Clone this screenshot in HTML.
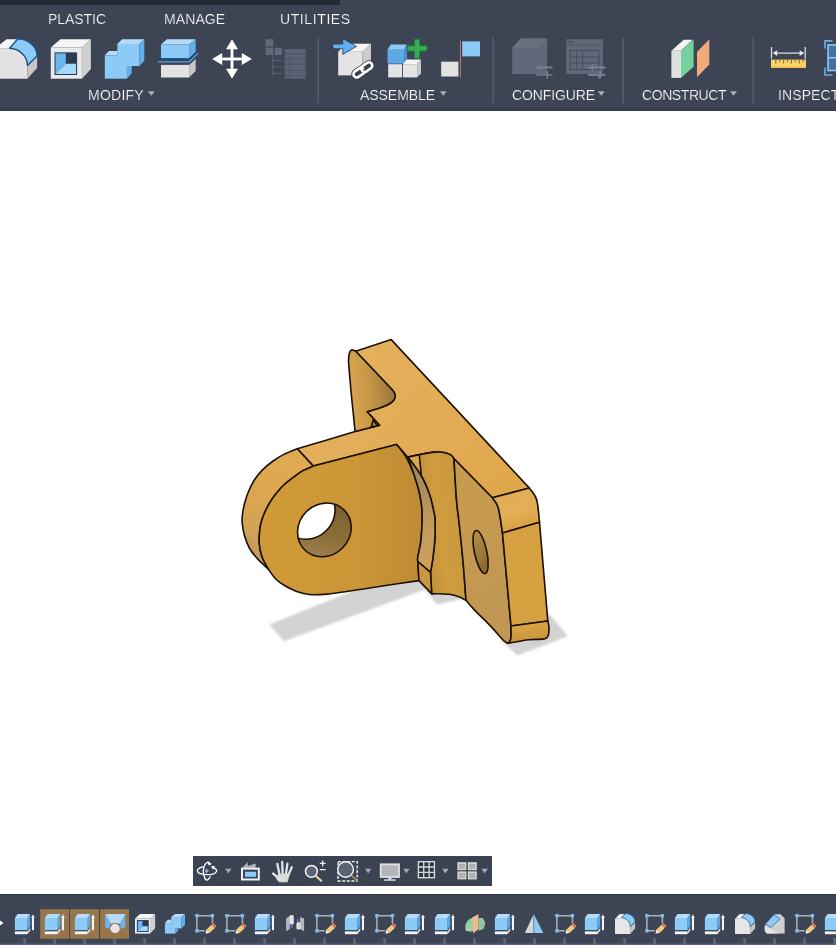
<!DOCTYPE html><html><head><meta charset="utf-8"><title>Fusion</title><style>
html,body{margin:0;padding:0}
body{width:836px;height:945px;overflow:hidden;background:#fff;position:relative;font-family:"Liberation Sans",sans-serif}
#top{position:absolute;left:0;top:0;width:836px;height:111px;background:#3d4555;overflow:hidden}
#top .dk{position:absolute;left:0;top:0;width:340px;height:5px;background:#232a36}
#top .bt{position:absolute;left:0;top:107px;width:836px;height:4px;background:linear-gradient(#3a4251,#353c49)}
.lb{position:absolute;will-change:transform;color:#ffffff;-webkit-text-stroke:0.22px #3d4555;font-size:14px;line-height:14px;white-space:nowrap;font-weight:400}
#nav{position:absolute;left:193px;top:856px;width:299px;height:30px;background:#3b4353}
#tl{position:absolute;left:0;top:894px;width:836px;height:51px;background:#3d4555;overflow:hidden;border-top:1px solid #2f3644;box-sizing:border-box}
#tl .bl{position:absolute;left:0;top:48px;width:836px;height:2px;background:linear-gradient(#48515f 50%,#586376 50%)}
svg{overflow:visible}
</style></head><body>
<svg id="model" width="836" height="945" viewBox="0 0 836 945" style="position:absolute;left:0;top:0">
<defs>
<filter id="bl" x="-5%" y="-10%" width="110%" height="120%"><feGaussianBlur stdDeviation="0.9"/></filter>
<linearGradient id="gPF" gradientUnits="userSpaceOnUse" x1="349" y1="400" x2="394" y2="396"><stop offset="0" stop-color="#dba650"/><stop offset="0.45" stop-color="#c89848"/><stop offset="1" stop-color="#9c763a"/></linearGradient>
<linearGradient id="gBand" gradientUnits="userSpaceOnUse" x1="290" y1="455" x2="250" y2="560"><stop offset="0" stop-color="#e0aa52"/><stop offset="0.5" stop-color="#dba650"/><stop offset="0.8" stop-color="#cfa05a"/><stop offset="1" stop-color="#c0955a"/></linearGradient>
<linearGradient id="gLug" gradientUnits="userSpaceOnUse" x1="260" y1="520" x2="422" y2="520"><stop offset="0" stop-color="#d09a38"/><stop offset="0.6" stop-color="#cb9637"/><stop offset="1" stop-color="#bd8b35"/></linearGradient>
<linearGradient id="gSl" gradientUnits="userSpaceOnUse" x1="410" y1="460" x2="430" y2="570"><stop offset="0" stop-color="#9a8464"/><stop offset="0.3" stop-color="#b08e5c"/><stop offset="0.6" stop-color="#c29a5c"/><stop offset="1" stop-color="#cfa25a"/></linearGradient>
<linearGradient id="gTop" gradientUnits="userSpaceOnUse" x1="360" y1="350" x2="520" y2="500"><stop offset="0" stop-color="#e4b05c"/><stop offset="0.5" stop-color="#e2ac56"/><stop offset="1" stop-color="#dfa74b"/></linearGradient>
<linearGradient id="gGus" gradientUnits="userSpaceOnUse" x1="425" y1="520" x2="462" y2="516"><stop offset="0" stop-color="#c49238"/><stop offset="0.4" stop-color="#d09c40"/><stop offset="1" stop-color="#c8973e"/></linearGradient>
<linearGradient id="gPlate" gradientUnits="userSpaceOnUse" x1="455" y1="520" x2="510" y2="600"><stop offset="0" stop-color="#c69a4f"/><stop offset="1" stop-color="#c09753"/></linearGradient>
<linearGradient id="gR1" gradientUnits="userSpaceOnUse" x1="510" y1="490" x2="520" y2="530"><stop offset="0" stop-color="#e2ad58"/><stop offset="0.55" stop-color="#e4ae55"/><stop offset="1" stop-color="#d8a040"/></linearGradient>
<linearGradient id="gR3" gradientUnits="userSpaceOnUse" x1="528" y1="622" x2="530" y2="641"><stop offset="0" stop-color="#dca548"/><stop offset="1" stop-color="#c8943a"/></linearGradient>
<linearGradient id="gHole" gradientUnits="userSpaceOnUse" x1="300" y1="545" x2="350" y2="515"><stop offset="0" stop-color="#a08050"/><stop offset="0.35" stop-color="#8e7038"/><stop offset="1" stop-color="#7a6030"/></linearGradient>
<linearGradient id="gHole2" gradientUnits="userSpaceOnUse" x1="474" y1="540" x2="488" y2="565"><stop offset="0" stop-color="#b08a40"/><stop offset="1" stop-color="#8a6a30"/></linearGradient>
<clipPath id="cHole"><ellipse cx="324.4" cy="529.9" rx="28" ry="25.6" transform="rotate(-45 324.4 529.9)"/></clipPath>
</defs>
<g fill="#d3d3d3" filter="url(#bl)">
<path d="M269.3,624.6 L283.9,641.3 L425,589.6 L437,604.7 L462,599 L460,560 L355,590Z"/>
<path d="M500,640 L517.6,655.6 L567.7,636.2 L551.5,616.5 L530,600Z"/>
</g>
<path d="M355.7,351.2L391.2,339.6L529.4,488.1L492.3,497.7L454.0,458.7C453.5,458.1 452.5,456.1 451.0,455.1C449.5,454.1 447.6,453.2 445.0,452.7C442.4,452.2 439.7,451.8 435.5,452.1C431.3,452.4 424.5,453.6 419.9,454.5C415.3,455.4 409.9,456.8 407.9,457.2L396.5,444.4L313.3,466.1L297.3,448.7C306.9,445.9 341.4,435.5 355.1,431.6C368.8,427.7 375.5,426.4 379.6,425.3L367.1,411.7C369.3,411.1 376.0,409.4 380.2,407.8C384.4,406.2 389.7,403.9 392.2,401.8C394.7,399.7 395.2,397.2 395.2,395.2C395.2,393.2 392.7,390.7 392.2,389.8L355.7,351.2Z" fill="url(#gTop)" stroke="#1c1000" stroke-width="1.6" stroke-linejoin="round" stroke-linecap="round"/>
<path d="M348.5,361.1C348.6,359.8 348.8,355.4 349.3,353.5C349.8,351.6 350.4,350.3 351.5,349.9C352.6,349.5 355.0,351.0 355.7,351.2L392.2,389.8C392.7,390.7 395.2,393.2 395.2,395.2C395.2,397.2 394.7,399.7 392.2,401.8C389.7,403.9 384.4,406.2 380.2,407.8C376.0,409.4 369.3,411.1 367.1,411.7L379.6,425.3L355.1,431.6C354.9,429.6 354.6,426.6 353.9,419.7C353.2,412.8 351.8,399.8 350.9,390.0C350.0,380.2 348.9,365.9 348.5,361.1Z" fill="url(#gPF)" stroke="#1c1000" stroke-width="1.6" stroke-linejoin="round" stroke-linecap="round"/>
<path d="M371.3,426.8 L373.1,419.9 L377.4,425.6Z" fill="#b08840" stroke="#1c1000" stroke-width="1.6" stroke-linejoin="round" stroke-linecap="round"/>
<path d="M313.3,466.1L297.3,448.7C295.1,449.6 288.0,452.3 283.8,454.4C279.6,456.5 276.1,458.8 272.4,461.5C268.7,464.2 264.8,467.5 261.8,470.6C258.8,473.7 256.4,476.7 254.2,480.2C252.0,483.7 250.0,487.9 248.4,491.7C246.8,495.5 245.6,499.3 244.6,503.2C243.6,507.1 242.8,511.7 242.4,515.0C242.0,518.3 241.9,519.7 242.2,523.0C242.5,526.3 243.1,530.8 244.3,535.0C245.5,539.2 247.5,544.6 249.6,548.5C251.7,552.4 254.7,555.5 257.0,558.2C259.3,560.9 261.6,562.8 263.5,564.7C265.4,566.6 267.8,568.6 268.6,569.4C267.5,567.2 263.4,560.5 261.9,556.2C260.3,551.9 259.7,547.5 259.3,543.5C258.9,539.5 259.3,535.4 259.6,532.0C259.9,528.6 260.2,526.2 261.0,523.0C261.8,519.8 263.0,516.5 264.5,513.0C266.0,509.5 268.2,505.2 270.2,502.0C272.1,498.8 273.9,496.4 276.2,493.6C278.5,490.8 280.9,487.7 283.8,485.0C286.7,482.3 290.2,479.7 293.4,477.3C296.6,474.9 299.7,472.5 303.0,470.6C306.3,468.7 311.6,466.9 313.3,466.1Z" fill="url(#gBand)" stroke="#1c1000" stroke-width="1.6" stroke-linejoin="round" stroke-linecap="round"/>
<path d="M313.3,466.1C311.6,466.9 306.3,468.7 303.0,470.6C299.7,472.5 296.6,474.9 293.4,477.3C290.2,479.7 286.7,482.3 283.8,485.0C280.9,487.7 278.5,490.8 276.2,493.6C273.9,496.4 272.1,498.8 270.2,502.0C268.2,505.2 266.0,509.5 264.5,513.0C263.0,516.5 261.8,519.8 261.0,523.0C260.2,526.2 259.9,528.6 259.6,532.0C259.3,535.4 258.9,539.5 259.3,543.5C259.7,547.5 260.3,551.9 261.9,556.2C263.4,560.5 266.2,565.5 268.6,569.4C271.0,573.3 273.5,576.8 276.2,579.5C278.9,582.2 281.3,583.7 285.0,585.8C288.7,587.9 293.8,590.6 298.2,592.1C302.6,593.6 306.5,594.4 311.3,594.7C316.1,595.0 321.5,594.6 327.1,594.1C332.7,593.6 335.5,593.2 345.0,591.8C354.5,590.4 371.7,587.7 384.0,585.8C396.3,583.9 413.2,581.5 419.0,580.6L417.8,561.5C417.8,560.8 417.3,560.6 417.8,557.1C418.3,553.6 420.2,547.0 420.9,540.6C421.6,534.2 422.1,524.7 422.2,519.0C422.3,513.3 422.2,511.1 421.7,506.6C421.2,502.1 420.6,497.6 419.3,492.2C418.0,486.8 416.2,480.3 413.9,474.3C411.6,468.3 408.5,461.3 405.6,456.3C402.7,451.3 398.0,446.4 396.5,444.4L313.3,466.1Z" fill="url(#gLug)" stroke="#1c1000" stroke-width="1.6" stroke-linejoin="round" stroke-linecap="round"/>
<ellipse cx="324.4" cy="529.9" rx="28" ry="25.6" transform="rotate(-45 324.4 529.9)" fill="url(#gHole)"/>
<g clip-path="url(#cHole)"><ellipse cx="308.3" cy="512.4" rx="28" ry="25.6" transform="rotate(-45 308.3 512.4)" fill="#fff" stroke="#1c1000" stroke-width="1.6" stroke-linejoin="round" stroke-linecap="round"/></g>
<ellipse cx="324.4" cy="529.9" rx="28" ry="25.6" transform="rotate(-45 324.4 529.9)" fill="none" stroke="#1c1000" stroke-width="1.6" stroke-linejoin="round" stroke-linecap="round"/>
<path d="M454.0,458.7C453.5,458.1 452.5,456.1 451.0,455.1C449.5,454.1 447.6,453.2 445.0,452.7C442.4,452.2 439.7,451.8 435.5,452.1C431.3,452.4 424.5,453.6 419.9,454.5C415.3,455.4 409.9,456.8 407.9,457.2C410.1,460.2 417.5,469.3 421.1,475.5C424.7,481.7 427.4,488.6 429.5,494.6C431.6,500.6 432.8,507.2 433.7,511.3C434.6,515.4 434.7,514.5 434.9,519.0C435.1,523.5 435.2,531.8 434.9,538.1C434.6,544.5 433.7,551.4 433.0,557.1C432.3,562.8 430.9,569.8 430.5,572.3L431.7,593.9C432.8,593.9 434.9,593.6 438.1,593.7C441.3,593.8 447.2,593.9 450.8,594.5C454.4,595.1 457.1,596.1 459.6,597.1C462.1,598.1 464.9,599.8 466.0,600.3C465.5,593.6 464.1,573.4 462.9,560.0C461.7,546.6 459.9,530.0 458.8,520.0C457.7,510.0 457.3,510.2 456.5,500.0C455.7,489.8 454.4,465.6 454.0,458.7Z" fill="url(#gGus)" stroke="#1c1000" stroke-width="1.6" stroke-linejoin="round" stroke-linecap="round"/>
<path d="M407.9,457.2 C408.9,458.6 411.8,462.4 414.0,465.5C416.2,468.6 420.1,474.2 421.3,476.0 L419.3,454.6Z" fill="#dba650" stroke="#1c1000" stroke-width="1.6" stroke-linejoin="round" stroke-linecap="round"/>
<path d="M407.9,457.2C408.9,460.1 412.0,468.5 413.9,474.3C415.8,480.1 418.0,486.8 419.3,492.2C420.6,497.6 421.2,502.1 421.7,506.6C422.2,511.1 422.3,513.3 422.2,519.0C422.1,524.7 421.6,534.2 420.9,540.6C420.2,547.0 418.3,553.6 417.8,557.1C417.3,560.6 417.8,560.8 417.8,561.5L430.5,572.3C430.9,569.8 432.3,562.8 433.0,557.1C433.7,551.4 434.6,544.5 434.9,538.1C435.2,531.8 435.1,523.5 434.9,519.0C434.7,514.5 434.6,515.4 433.7,511.3C432.8,507.2 431.6,500.6 429.5,494.6C427.4,488.6 424.7,481.7 421.1,475.5C417.5,469.3 410.1,460.2 407.9,457.2Z" fill="url(#gSl)" stroke="#1c1000" stroke-width="1.6" stroke-linejoin="round" stroke-linecap="round"/>
<path d="M417.8,561.5 L430.5,572.3 L431.7,593.9 L419.0,580.6Z" fill="#c9983f" stroke="#1c1000" stroke-width="1.6" stroke-linejoin="round" stroke-linecap="round"/>
<path d="M454.0,458.7L492.3,497.7C493.3,499.4 496.6,501.9 498.3,507.8C500.0,513.7 501.8,528.8 502.5,533.0L511.0,626.0C511.0,627.9 511.2,634.8 511.0,637.5C510.8,640.2 510.1,641.0 509.5,642.0C508.9,643.0 507.9,643.0 507.6,643.2C506.9,642.7 506.2,643.2 503.3,640.3C500.4,637.4 495.2,630.9 490.4,625.9C485.6,620.9 478.7,614.4 474.6,610.1C470.5,605.8 467.4,601.9 466.0,600.3C465.5,593.6 464.1,573.4 462.9,560.0C461.7,546.6 459.9,530.0 458.8,520.0C457.7,510.0 457.3,510.2 456.5,500.0C455.7,489.8 454.4,465.6 454.0,458.7Z" fill="url(#gPlate)" stroke="#1c1000" stroke-width="1.6" stroke-linejoin="round" stroke-linecap="round"/>
<ellipse cx="480.6" cy="552" rx="6.2" ry="22" transform="rotate(-12 480.6 552)" fill="url(#gHole2)" stroke="#1c1000" stroke-width="1.6" stroke-linejoin="round" stroke-linecap="round"/>
<path d="M492.3,497.7L529.4,488.1C530.6,490.0 534.9,493.8 536.6,499.5C538.3,505.2 539.0,518.4 539.5,522.2L502.5,533.0C501.8,528.8 500.0,513.7 498.3,507.8C496.6,501.9 493.3,499.4 492.3,497.7Z" fill="url(#gR1)" stroke="#1c1000" stroke-width="1.6" stroke-linejoin="round" stroke-linecap="round"/>
<path d="M502.5,533.0L539.5,522.2L547.8,621.0L511.0,626.0L502.5,533.0Z" fill="#d7a040" stroke="#1c1000" stroke-width="1.6" stroke-linejoin="round" stroke-linecap="round"/>
<path d="M511.0,626.0L547.8,621.0C548.0,622.3 549.3,626.0 549.0,628.9C548.7,631.8 549.5,636.4 546.1,638.2C542.8,640.0 534.9,638.9 528.9,639.7C522.9,640.5 513.8,642.4 510.2,643.0C506.6,643.6 508.0,643.2 507.6,643.2C507.9,643.0 508.9,643.0 509.5,642.0C510.1,641.0 510.8,640.2 511.0,637.5C511.2,634.8 511.0,627.9 511.0,626.0Z" fill="url(#gR3)" stroke="#1c1000" stroke-width="1.6" stroke-linejoin="round" stroke-linecap="round"/>
</svg>
<div id="top"><div class="dk"></div><div class="bt"></div>
<div class="lb" style="left:47.5px;top:12px;letter-spacing:-0.05px">PLASTIC</div>
<div class="lb" style="left:163.5px;top:12px;letter-spacing:0.1px">MANAGE</div>
<div class="lb" style="left:279.5px;top:12px;letter-spacing:0.6px">UTILITIES</div>
<div class="lb" style="left:87.6px;top:88px;letter-spacing:0.25px">MODIFY</div>
<div class="lb" style="left:360px;top:88px;letter-spacing:-0.05px">ASSEMBLE</div>
<div class="lb" style="left:511.8px;top:88px;letter-spacing:-0.1px">CONFIGURE</div>
<div class="lb" style="left:642px;top:88px;letter-spacing:-0.42px">CONSTRUCT</div>
<div class="lb" style="left:777.7px;top:88px;letter-spacing:0.1px">INSPECT</div>
<svg width="836" height="111" viewBox="0 0 836 111" style="position:absolute;left:0;top:0">
<polygon points="-2.0,46.0 6.6,39.2 17.9,39.2 9.6,48.4 -2.0,48.7" fill="#f4f4f4" />
<path d="M-2,48.7 L9.6,48.2 C19,48.5 27.5,56 27.5,65.5 L27.5,78.7 L-2,78.7Z" fill="#e2e2e2"/>
<polygon points="27.5,65.5 37.1,55.9 37.1,67.9 27.5,78.7" fill="#c6c6c6" />
<path d="M9.6,48.2 L17.9,38.8 C28,39 37,46 37.1,55.9 L27.5,65.5 C27.5,56 19,48.5 9.6,48.2Z" fill="#8ccaf7" stroke="#1d4f88" stroke-width="1.4" stroke-linejoin="round"/>
<polygon points="50.8,47.6 60.4,39.2 90.9,39.2 81.9,47.6" fill="#f4f4f4" />
<rect x="50.8" y="47.6" width="31.1" height="31.1" fill="#e9e9e9" />
<polygon points="81.9,47.6 90.9,39.2 90.9,69.1 81.9,78.7" fill="#cfcfcf" />
<rect x="55.0" y="52.9" width="21.6" height="21.6" fill="#2e3a4f" />
<polygon points="55.0,52.9 65.8,52.9 65.8,63.7 55.0,74.5" fill="#6cb4ee" />
<polygon points="65.8,63.7 76.6,63.7 76.6,74.5 55.0,74.5" fill="#a6d8fb" />
<rect x="55.0" y="52.9" width="21.6" height="21.6" fill="none" stroke="#1f3a5c" stroke-width="1"/>
<polygon points="104.8,55.3 109.0,51.1 117.3,51.1 117.3,55.3" fill="#b4dcfa" />
<polygon points="117.3,44.0 122.1,39.2 144.3,39.2 139.5,44.0" fill="#b4dcfa" />
<rect x="117.3" y="44.0" width="22.2" height="22.1" fill="#8ccaf7" />
<rect x="104.8" y="55.3" width="22.1" height="23.4" fill="#8ccaf7" />
<polygon points="139.5,44.0 144.3,39.2 144.3,60.7 139.5,66.1" fill="#66aeea" />
<polygon points="126.9,66.1 131.7,66.1 131.7,73.3 126.9,78.7" fill="#66aeea" />
<polygon points="161.0,44.6 167.0,39.2 195.7,39.2 189.1,44.6" fill="#b4dcfa" />
<rect x="161.0" y="44.6" width="28.1" height="13.7" fill="#8ccaf7" />
<polygon points="189.1,44.6 195.7,39.2 195.7,51.7 189.1,58.3" fill="#66aeea" />
<polygon points="161.0,58.3 189.1,58.3 195.7,51.7 197.6,53.0 189.3,61.2 161.0,61.2" fill="#1d4c7e" />
<path d="M158,61.8 L189.3,61.8 L198,53.2" fill="none" stroke="#6a9ccc" stroke-width="1.2"/>
<rect x="161.0" y="64.9" width="28.1" height="12.6" fill="#e2e2e2" />
<polygon points="189.1,64.9 195.7,58.9 195.7,70.9 189.1,77.5" fill="#c6c6c6" />
<g fill="#fff"><rect x="220" y="57.6" width="24" height="2.8"/><rect x="230.6" y="47" width="2.8" height="24"/>
<polygon points="212.2,59.0 222.2,53.0 222.2,65.0" fill="#fff" />
<polygon points="251.8,59.0 241.8,53.0 241.8,65.0" fill="#fff" />
<polygon points="232.0,39.2 226.0,49.2 238.0,49.2" fill="#fff" />
<polygon points="232.0,78.8 226.0,68.8 238.0,68.8" fill="#fff" />
</g>
<rect x="265.5" y="39.2" width="7.9" height="7.3" fill="#606979" />
<rect x="265.5" y="47.8" width="7.9" height="7.2" fill="#606979" />
<rect x="274.7" y="47.8" width="7.3" height="7.2" fill="#606979" />
<rect x="284.6" y="49.1" width="21.1" height="29.6" fill="#5a6373" />
<rect x="284.6" y="53.3" width="21.1" height="0.8" fill="#4a5262" />
<rect x="284.6" y="58.6" width="21.1" height="0.8" fill="#4a5262" />
<rect x="284.6" y="63.9" width="21.1" height="0.8" fill="#4a5262" />
<rect x="284.6" y="69.8" width="21.1" height="0.8" fill="#4a5262" />
<rect x="284.6" y="75.0" width="21.1" height="0.8" fill="#4a5262" />
<rect x="289.0" y="53.7" width="0.8" height="25.0" fill="#4a5262" />
<rect x="272.4" y="55.0" width="0.8" height="20.4" fill="#606979" />
<rect x="272.4" y="59.9" width="9.6" height="0.8" fill="#606979" />
<rect x="272.4" y="66.5" width="9.6" height="0.8" fill="#606979" />
<rect x="272.4" y="73.0" width="9.6" height="0.8" fill="#606979" />
<polygon points="338.2,51.7 346.0,43.8 371.0,43.8 362.5,51.7" fill="#f4f4f4" />
<rect x="338.2" y="51.7" width="24.3" height="23.7" fill="#e4e4e4" />
<polygon points="362.5,51.7 371.0,43.8 371.0,66.9 362.5,75.4" fill="#cccccc" />
<polygon points="332.9,44.1 342.8,44.1 342.8,38.6 356.6,46.4 342.8,54.4 342.8,48.8 332.9,48.8" fill="#5fb0f0" stroke="#2d3a50" stroke-width="0.8" stroke-linejoin="round"/>
<g transform="translate(362.85,69.9) rotate(-35)" fill="none"><rect x="-10.8" y="-3.3" width="11.9" height="6.6" rx="3.3" stroke="#30363f" stroke-width="4.3"/><rect x="-1.1" y="-3.3" width="11.9" height="6.6" rx="3.3" stroke="#30363f" stroke-width="4.3"/><rect x="-10.8" y="-3.3" width="11.9" height="6.6" rx="3.3" fill="#3a404c" stroke="#fff" stroke-width="2.6"/><rect x="-1.1" y="-3.3" width="11.9" height="6.6" rx="3.3" fill="#3a404c" stroke="#fff" stroke-width="2.6"/><path d="M-7.5,-3.3H-2.2A3.3,3.3 0 0 1 1.1,0" stroke="#fff" stroke-width="2.6"/></g>
<polygon points="387.5,49.8 390.8,44.5 406.6,44.5 404.0,49.8" fill="#8ccaf7" />
<rect x="387.5" y="49.8" width="16.5" height="13.8" fill="#5fa8e6" />
<polygon points="404.0,49.8 406.6,44.5 407.2,58.3 404.0,63.6" fill="#4a8fd0" />
<rect x="388.2" y="64.2" width="13.8" height="13.2" fill="#e4e4e4" />
<rect x="402.9" y="64.2" width="14.2" height="13.2" fill="#e4e4e4" />
<polygon points="402.9,64.2 406.6,59.6 421.0,59.6 417.1,64.2" fill="#f4f4f4" />
<polygon points="417.1,64.2 421.0,59.6 421.0,73.4 417.1,77.4" fill="#c8c8c8" />
<path d="M414.5,39.2h5.2v6.6h7.3v5.3h-7.3v7.2h-5.2v-7.2h-7.3v-5.3h7.3z" fill="#2fae52" stroke="#1e7c3a" stroke-width="0.8"/>
<rect x="441.2" y="61.7" width="17.2" height="14.8" fill="#e2e2e2" />
<rect x="459.9" y="40.6" width="0.9" height="37.0" fill="#d67a70" />
<rect x="462.2" y="41.4" width="17.8" height="15.0" fill="#8ccaf7" />
<polygon points="512.2,47.8 520.8,38.6 547.1,38.6 547.1,74.1 512.2,74.1" fill="#5f6878" />
<polygon points="512.2,47.8 520.8,38.6 547.1,38.6 539.0,47.8" fill="#67707f" />
<rect x="536.0" y="66.6" width="16.5" height="1.8" fill="#7a8393" />
<rect x="536.0" y="74.2" width="16.5" height="1.4" fill="#7a8393" />
<rect x="546.6" y="71.0" width="1.4" height="7.6" fill="#7a8393" />
<rect x="538.5" y="64.4" width="1.5" height="6.2" fill="#70798a" />
<rect x="588.0" y="66.6" width="16.5" height="1.8" fill="#7a8393" />
<rect x="588.0" y="74.2" width="16.5" height="1.4" fill="#7a8393" />
<rect x="598.6" y="71.0" width="1.4" height="7.6" fill="#7a8393" />
<rect x="590.5" y="64.4" width="1.5" height="6.2" fill="#70798a" />
<rect x="566.2" y="39.2" width="36.8" height="34.9" fill="#5f6878" />
<rect x="566.2" y="44.6" width="36.8" height="1.0" fill="#4e5666" />
<rect x="568.5" y="41.0" width="4.5" height="2.2" fill="#4e5666" />
<g fill="none" stroke="#454d5d" stroke-width="1"><rect x="570.1" y="50.4" width="29" height="19.1"/><path d="M576.7,50.4v19.1M582.6,50.4v19.1M570.1,57h29M570.1,62.9h29"/></g>
<rect x="588.0" y="66.6" width="17.5" height="1.8" fill="#7a8393" />
<rect x="588.0" y="74.2" width="17.5" height="1.4" fill="#7a8393" />
<rect x="599.6" y="71.0" width="1.4" height="7.6" fill="#7a8393" />
<rect x="591.5" y="64.4" width="1.5" height="6.2" fill="#6f86a8" />
<polygon points="671.4,50.8 683.7,39.7 692.8,39.7 681.0,50.8" fill="#f4f4f4" />
<rect x="671.4" y="50.8" width="9.6" height="27.1" fill="#e0e0e0" />
<polygon points="681.0,50.8 693.6,39.7 693.6,66.8 681.0,77.9" fill="#74d39c" />
<polygon points="697.0,52.0 709.3,39.2 709.3,64.4 697.0,77.2" fill="#f2aa7c" />
<rect x="770.9" y="47.0" width="1.2" height="11.6" fill="#e4e6ea" />
<rect x="804.6" y="47.0" width="1.2" height="11.6" fill="#e4e6ea" />
<rect x="776.0" y="52.5" width="25.0" height="1.2" fill="#e4e6ea" />
<polygon points="772.6,53.1 777.2,50.3 777.2,55.9" fill="#e4e6ea" />
<polygon points="804.2,53.1 799.6,50.3 799.6,55.9" fill="#e4e6ea" />
<rect x="771.0" y="59.6" width="35.0" height="8.3" fill="#f7d36a" />
<rect x="771.0" y="66.6" width="35.0" height="1.3" fill="#f0be55" />
<rect x="775.3" y="59.6" width="1.0" height="4.0" fill="#8a6a2a" />
<rect x="779.2" y="59.6" width="1.0" height="2.6" fill="#8a6a2a" />
<rect x="783.1" y="59.6" width="1.0" height="4.0" fill="#8a6a2a" />
<rect x="787.0" y="59.6" width="1.0" height="2.6" fill="#8a6a2a" />
<rect x="790.9" y="59.6" width="1.0" height="4.0" fill="#8a6a2a" />
<rect x="794.8" y="59.6" width="1.0" height="2.6" fill="#8a6a2a" />
<rect x="798.7" y="59.6" width="1.0" height="4.0" fill="#8a6a2a" />
<rect x="802.6" y="59.6" width="1.0" height="2.6" fill="#8a6a2a" />
<path d="M832.5,40.9H825V48.5M825,67.4V75H832.5" fill="none" stroke="#6aaee8" stroke-width="1.6"/>
<rect x="828.0" y="44.9" width="12.0" height="25.6" fill="#45709f" stroke="#8cc8f5" stroke-width="1.6"/>
<rect x="828.0" y="57.0" width="12.0" height="1.4" fill="#8cc8f5" />
<rect x="317.5" y="37.4" width="1.4" height="65.6" fill="#566070" />
<rect x="492.5" y="37.4" width="1.4" height="65.6" fill="#566070" />
<rect x="622.5" y="37.4" width="1.4" height="65.6" fill="#566070" />
<rect x="752.5" y="37.4" width="1.4" height="65.6" fill="#566070" />
<polygon points="147.8,91.2 154.8,91.2 151.3,95.8" fill="#a6aebb" />
<polygon points="439.8,91.2 446.8,91.2 443.3,95.8" fill="#a6aebb" />
<polygon points="597.8,91.2 604.8,91.2 601.3,95.8" fill="#a6aebb" />
<polygon points="730.0,91.2 737.0,91.2 733.5,95.8" fill="#a6aebb" />
</svg>
</div>
<div id="nav"><svg width="299" height="29.5" viewBox="193 856 299 29.5" style="position:absolute;left:0;top:0">
<g fill="none" stroke="#fff" stroke-width="1.35" stroke-linecap="round"><path d="M209.3,863.2C207,861 203.3,864.5 203.3,871C203.3,877.5 206,881.5 208,879.6C209,878.6 209.8,877.6 210.2,876.8"/><path d="M213.4,867.9C216,868.6 217,870.2 216.6,871.4C215.8,873.8 211,875 206.5,874.6C201.5,874.2 197.4,872.8 197.4,870.9C197.4,869.2 199.5,867.6 202.6,866.8"/></g>
<polygon points="207.6,861.0 211.8,863.9 208.6,865.6" fill="#fff" />
<polygon points="211.2,865.8 215.2,866.4 212.8,869.8" fill="#fff" />
<polygon points="206.7,868.6 208.8,870.9 206.7,873.2 204.6,870.9" fill="#79b2ec" />
<polygon points="225.2,868.8 231.5,868.8 228.3,873.4" fill="#9fa7b4" />
<polygon points="242.3,867.8 247.7,862.1 247.7,865.9 255.7,863.4 255.7,867.8" fill="#b0b4bc" />
<rect x="242.0" y="868.6" width="16.8" height="10.9" fill="none" stroke="#eef0f4" stroke-width="2"/>
<rect x="244.6" y="871.2" width="12.0" height="6.1" fill="#8ccaf7" stroke="#2a3f5c" stroke-width="0.9"/>
<path d="M278.4,874.5 L287.6,873.8 L288.6,876.5 L287.2,881.8 L279.2,881.8 L276.4,878.6Z" fill="#dcdcd8" stroke="#dcdcd8" stroke-width="1" stroke-linejoin="round"/>
<g stroke="#e0e4ea" stroke-width="2.3" stroke-linecap="round" fill="none"><path d="M279.4,874L277.3,863.8"/><path d="M282.6,873.4L282.2,861.9"/><path d="M286,873.6L287.4,863.6"/><path d="M288.2,875.6L291.8,867.2"/><path d="M279,878.6L273.2,873.6" stroke-width="2.5"/></g>
<circle cx="311.4" cy="871.3" r="5.9" fill="#5a6474" stroke="#f4f4f4" stroke-width="1.5"/>
<path d="M316.2,876.2L321.2,880.8" stroke="#ead2b2" stroke-width="2.2" stroke-linecap="round"/>
<path d="M319.8,863.4h5.8M322.7,860.6v5.6M319.8,869.7h5.8" stroke="#f2f2f2" stroke-width="1.3" fill="none"/>
<rect x="338" y="861.6" width="19.2" height="19.4" fill="none" stroke="#f2f2f2" stroke-width="1.4" stroke-dasharray="3 1.6"/>
<circle cx="345.6" cy="869.5" r="7.8" fill="#5a6474" stroke="#f2f2f2" stroke-width="1.4"/>
<path d="M352.2,876.2L357,880.6" stroke="#a89064" stroke-width="1.7" stroke-linecap="round"/>
<polygon points="365.0,868.8 371.4,868.8 368.2,873.4" fill="#9fa7b4" />
<rect x="380.7" y="864.3" width="18.3" height="12.7" fill="#b4b6ba" stroke="#dfe1e5" stroke-width="1.8"/>
<rect x="388.4" y="877.8" width="3.0" height="1.8" fill="#dfe1e5" />
<rect x="384.2" y="879.3" width="11.4" height="1.5" fill="#dfe1e5" />
<polygon points="403.2,868.8 409.6,868.8 406.4,873.4" fill="#9fa7b4" />
<g fill="#2c323e" stroke="#d4d8de" stroke-width="1.4"><rect x="418.4" y="861.7" width="16" height="16"/><path d="M423.7,861.7v16M429.1,861.7v16M418.4,867v16" visibility="hidden"/><path d="M423.7,861.7v16M429.1,861.7v16M418.4,867h16M418.4,872.4h16"/></g>
<polygon points="442.2,868.8 448.6,868.8 445.4,873.4" fill="#9fa7b4" />
<rect x="457.4" y="862.2" width="9.0" height="8.0" fill="#d6d6d6" />
<rect x="459.4" y="864.2" width="5.0" height="4.0" fill="#b4b4b4" stroke="#9a9a9a" stroke-width="0.6"/>
<rect x="467.8" y="862.2" width="9.0" height="8.0" fill="#d6d6d6" />
<rect x="469.8" y="864.2" width="5.0" height="4.0" fill="#b4b4b4" stroke="#9a9a9a" stroke-width="0.6"/>
<rect x="457.4" y="871.4" width="9.0" height="8.0" fill="#d6d6d6" />
<rect x="459.4" y="873.4" width="5.0" height="4.0" fill="#b4b4b4" stroke="#9a9a9a" stroke-width="0.6"/>
<rect x="467.8" y="871.4" width="9.0" height="8.0" fill="#d6d6d6" />
<rect x="469.8" y="873.4" width="5.0" height="4.0" fill="#b4b4b4" stroke="#9a9a9a" stroke-width="0.6"/>
<polygon points="481.4,868.8 487.8,868.8 484.6,873.4" fill="#9fa7b4" />
</svg></div>
<div id="tl"><div class="bl"></div><svg width="836" height="51" viewBox="0 894 836 51" style="position:absolute;left:0;top:-1px">
<rect x="40.2" y="909.2" width="28.9" height="29.6" fill="#96764a" />
<rect x="70.1" y="909.2" width="28.9" height="29.6" fill="#96764a" />
<rect x="100.1" y="909.2" width="28.9" height="29.6" fill="#96764a" />
<rect x="23.3" y="938.0" width="2.5" height="7.0" fill="#5d687b" />
<rect x="53.3" y="938.0" width="2.5" height="7.0" fill="#5d687b" />
<rect x="83.3" y="938.0" width="2.5" height="7.0" fill="#5d687b" />
<rect x="113.3" y="938.0" width="2.5" height="7.0" fill="#5d687b" />
<rect x="143.3" y="938.0" width="2.5" height="7.0" fill="#5d687b" />
<rect x="173.3" y="938.0" width="2.5" height="7.0" fill="#5d687b" />
<rect x="203.3" y="938.0" width="2.5" height="7.0" fill="#5d687b" />
<rect x="233.3" y="938.0" width="2.5" height="7.0" fill="#5d687b" />
<rect x="263.3" y="938.0" width="2.5" height="7.0" fill="#5d687b" />
<rect x="293.3" y="938.0" width="2.5" height="7.0" fill="#5d687b" />
<rect x="323.3" y="938.0" width="2.5" height="7.0" fill="#5d687b" />
<rect x="353.3" y="938.0" width="2.5" height="7.0" fill="#5d687b" />
<rect x="383.3" y="938.0" width="2.5" height="7.0" fill="#5d687b" />
<rect x="413.3" y="938.0" width="2.5" height="7.0" fill="#5d687b" />
<rect x="443.3" y="938.0" width="2.5" height="7.0" fill="#5d687b" />
<rect x="473.3" y="938.0" width="2.5" height="7.0" fill="#5d687b" />
<rect x="503.3" y="938.0" width="2.5" height="7.0" fill="#5d687b" />
<rect x="533.3" y="938.0" width="2.5" height="7.0" fill="#5d687b" />
<rect x="563.3" y="938.0" width="2.5" height="7.0" fill="#5d687b" />
<rect x="593.3" y="938.0" width="2.5" height="7.0" fill="#5d687b" />
<rect x="623.3" y="938.0" width="2.5" height="7.0" fill="#5d687b" />
<rect x="653.3" y="938.0" width="2.5" height="7.0" fill="#5d687b" />
<rect x="683.3" y="938.0" width="2.5" height="7.0" fill="#5d687b" />
<rect x="713.3" y="938.0" width="2.5" height="7.0" fill="#5d687b" />
<rect x="743.3" y="938.0" width="2.5" height="7.0" fill="#5d687b" />
<rect x="773.3" y="938.0" width="2.5" height="7.0" fill="#5d687b" />
<rect x="803.3" y="938.0" width="2.5" height="7.0" fill="#5d687b" />
<rect x="833.3" y="938.0" width="2.5" height="7.0" fill="#5d687b" />
<polygon points="0.0,920.6 3.6,923.0 0.0,925.4" fill="#fff" />
<polygon points="14.9,918.0 17.6,914.1 30.2,914.1 27.6,918.0" fill="#b4dcfa" /><rect x="14.9" y="918.0" width="12.7" height="12.2" fill="#8ccaf7" /><polygon points="27.6,918.0 30.2,914.1 30.2,926.7 27.6,930.2" fill="#5fa8e6" /><polygon points="14.9,930.2 27.6,930.2 30.2,926.7 30.2,927.9 27.6,931.4 14.9,931.4" fill="#2f4560" /><rect x="14.9" y="931.4" width="12.7" height="2.8" fill="#f4f4f4" /><polygon points="27.6,931.4 30.2,927.9 30.2,930.6 27.6,934.2" fill="#e2e2e2" /><rect x="31.9" y="917.3" width="2.1" height="12.9" fill="#f4f4f4" /><polygon points="31.0,917.8 33.0,914.6 34.9,917.8" fill="#f4f4f4" />
<polygon points="44.9,918.0 47.6,914.1 60.2,914.1 57.6,918.0" fill="#b4dcfa" /><rect x="44.9" y="918.0" width="12.7" height="12.2" fill="#8ccaf7" /><polygon points="57.6,918.0 60.2,914.1 60.2,926.7 57.6,930.2" fill="#5fa8e6" /><polygon points="44.9,930.2 57.6,930.2 60.2,926.7 60.2,927.9 57.6,931.4 44.9,931.4" fill="#2f4560" /><rect x="44.9" y="931.4" width="12.7" height="2.8" fill="#f4f4f4" /><polygon points="57.6,931.4 60.2,927.9 60.2,930.6 57.6,934.2" fill="#e2e2e2" /><rect x="61.9" y="917.3" width="2.1" height="12.9" fill="#f4f4f4" /><polygon points="61.0,917.8 63.0,914.6 64.9,917.8" fill="#f4f4f4" />
<polygon points="74.9,918.0 77.6,914.1 90.2,914.1 87.6,918.0" fill="#b4dcfa" /><rect x="74.9" y="918.0" width="12.7" height="12.2" fill="#8ccaf7" /><polygon points="87.6,918.0 90.2,914.1 90.2,926.7 87.6,930.2" fill="#5fa8e6" /><polygon points="74.9,930.2 87.6,930.2 90.2,926.7 90.2,927.9 87.6,931.4 74.9,931.4" fill="#2f4560" /><rect x="74.9" y="931.4" width="12.7" height="2.8" fill="#f4f4f4" /><polygon points="87.6,931.4 90.2,927.9 90.2,930.6 87.6,934.2" fill="#e2e2e2" /><rect x="91.9" y="917.3" width="2.1" height="12.9" fill="#f4f4f4" /><polygon points="91.0,917.8 93.0,914.6 94.9,917.8" fill="#f4f4f4" />
<polygon points="105.2,914.0 125.3,914.0 120.2,923.4 110.4,923.4" fill="#b4dcfa" />
<polygon points="105.2,914.0 110.4,923.4 110.4,929.0 105.2,927.4" fill="#6cb4ee" />
<polygon points="125.3,914.0 120.2,923.4 120.2,929.0 125.3,927.4" fill="#6cb4ee" />
<circle cx="115.1" cy="928.5" r="5.1" fill="#e6e4e4" stroke="#8a6a50" stroke-width="0.8"/>
<polygon points="135.0,918.6 140.1,914.0 155.1,914.0 150.0,918.6" fill="#f6f6f6" />
<rect x="135.0" y="918.6" width="15.0" height="15.0" fill="#ececec" />
<polygon points="150.0,918.6 155.1,914.0 155.1,928.4 150.0,933.6" fill="#cfcfcf" />
<rect x="137.3" y="920.6" width="10.9" height="10.8" fill="#2e3a4f" />
<polygon points="137.3,920.6 142.4,920.6 142.4,926.2 137.3,931.4" fill="#6cb4ee" />
<polygon points="142.4,926.2 148.2,926.2 148.2,931.4 137.3,931.4" fill="#a6d8fb" />
<rect x="137.3" y="920.6" width="10.9" height="10.8" fill="none" stroke="#1f3a5c" stroke-width="0.9"/>
<polygon points="164.9,923.2 167.8,919.8 171.2,919.8 171.2,923.2" fill="#b4dcfa" />
<polygon points="171.2,916.9 175.2,914.0 185.0,914.0 181.5,916.9" fill="#b4dcfa" />
<rect x="171.2" y="916.9" width="10.3" height="11.5" fill="#8ccaf7" />
<rect x="164.9" y="923.2" width="10.3" height="10.4" fill="#8ccaf7" />
<polygon points="181.5,916.9 185.0,914.0 185.0,924.4 181.5,928.4" fill="#66aeea" />
<polygon points="175.2,928.4 178.1,928.4 178.1,930.7 175.2,933.6" fill="#66aeea" />
<path d="M196.9,930.8 V915.7 H212.4 V923.4 M196.9,930.8 H204.9" fill="none" stroke="#a8b1c0" stroke-width="1.5"/><rect x="195.2" y="914.0" width="3.4" height="3.4" fill="#86b8e4" /><rect x="210.7" y="914.0" width="3.4" height="3.4" fill="#86b8e4" /><rect x="195.2" y="929.1" width="3.4" height="3.4" fill="#86b8e4" /><g transform="translate(205.4,933.8) rotate(-44)"><polygon points="0,0 3.4,-2.3 3.4,2.3" fill="#f2f2f2"/><polygon points="0,0 1.2,-0.8 1.2,0.8" fill="#666"/><rect x="3.4" y="-2.3" width="7.4" height="4.6" fill="#f4d080"/><rect x="3.4" y="-0.5" width="7.4" height="1.1" fill="#ecc06a"/><rect x="10.8" y="-2.3" width="2.6" height="4.6" rx="0.9" fill="#e8766a"/></g>
<path d="M226.9,930.8 V915.7 H242.4 V923.4 M226.9,930.8 H234.9" fill="none" stroke="#a8b1c0" stroke-width="1.5"/><rect x="225.2" y="914.0" width="3.4" height="3.4" fill="#86b8e4" /><rect x="240.7" y="914.0" width="3.4" height="3.4" fill="#86b8e4" /><rect x="225.2" y="929.1" width="3.4" height="3.4" fill="#86b8e4" /><g transform="translate(235.4,933.8) rotate(-44)"><polygon points="0,0 3.4,-2.3 3.4,2.3" fill="#f2f2f2"/><polygon points="0,0 1.2,-0.8 1.2,0.8" fill="#666"/><rect x="3.4" y="-2.3" width="7.4" height="4.6" fill="#f4d080"/><rect x="3.4" y="-0.5" width="7.4" height="1.1" fill="#ecc06a"/><rect x="10.8" y="-2.3" width="2.6" height="4.6" rx="0.9" fill="#e8766a"/></g>
<polygon points="254.9,918.0 257.6,914.1 270.2,914.1 267.6,918.0" fill="#b4dcfa" /><rect x="254.9" y="918.0" width="12.7" height="12.2" fill="#8ccaf7" /><polygon points="267.6,918.0 270.2,914.1 270.2,926.7 267.6,930.2" fill="#5fa8e6" /><polygon points="254.9,930.2 267.6,930.2 270.2,926.7 270.2,927.9 267.6,931.4 254.9,931.4" fill="#2f4560" /><rect x="254.9" y="931.4" width="12.7" height="2.8" fill="#f4f4f4" /><polygon points="267.6,931.4 270.2,927.9 270.2,930.6 267.6,934.2" fill="#e2e2e2" /><rect x="271.9" y="917.3" width="2.1" height="12.9" fill="#f4f4f4" /><polygon points="271.0,917.8 272.9,914.6 274.9,917.8" fill="#f4f4f4" />
<polygon points="286.1,918.6 289.8,915.8 289.8,929.0 286.1,931.3" fill="#b4b8be" />
<polygon points="300.1,916.9 304.1,918.6 304.1,931.3 300.1,929.0" fill="#b4b8be" />
<rect x="289.5" y="915.0" width="4.3" height="9.6" fill="#e0e2e4" rx="1.6"/>
<rect x="296.4" y="922.0" width="4.3" height="7.6" fill="#dcdee0" rx="1.6"/>
<rect x="290.9" y="924.4" width="1.7" height="3.4" fill="#6a80d0" />
<rect x="297.0" y="919.2" width="1.4" height="3.4" fill="#6a80d0" />
<path d="M316.9,930.8 V915.7 H332.4 V923.4 M316.9,930.8 H324.9" fill="none" stroke="#a8b1c0" stroke-width="1.5"/><rect x="315.2" y="914.0" width="3.4" height="3.4" fill="#86b8e4" /><rect x="330.7" y="914.0" width="3.4" height="3.4" fill="#86b8e4" /><rect x="315.2" y="929.1" width="3.4" height="3.4" fill="#86b8e4" /><g transform="translate(325.4,933.8) rotate(-44)"><polygon points="0,0 3.4,-2.3 3.4,2.3" fill="#f2f2f2"/><polygon points="0,0 1.2,-0.8 1.2,0.8" fill="#666"/><rect x="3.4" y="-2.3" width="7.4" height="4.6" fill="#f4d080"/><rect x="3.4" y="-0.5" width="7.4" height="1.1" fill="#ecc06a"/><rect x="10.8" y="-2.3" width="2.6" height="4.6" rx="0.9" fill="#e8766a"/></g>
<polygon points="344.9,918.0 347.6,914.1 360.2,914.1 357.6,918.0" fill="#b4dcfa" /><rect x="344.9" y="918.0" width="12.7" height="12.2" fill="#8ccaf7" /><polygon points="357.6,918.0 360.2,914.1 360.2,926.7 357.6,930.2" fill="#5fa8e6" /><polygon points="344.9,930.2 357.6,930.2 360.2,926.7 360.2,927.9 357.6,931.4 344.9,931.4" fill="#2f4560" /><rect x="344.9" y="931.4" width="12.7" height="2.8" fill="#f4f4f4" /><polygon points="357.6,931.4 360.2,927.9 360.2,930.6 357.6,934.2" fill="#e2e2e2" /><rect x="361.9" y="917.3" width="2.1" height="12.9" fill="#f4f4f4" /><polygon points="361.0,917.8 362.9,914.6 364.9,917.8" fill="#f4f4f4" />
<path d="M376.9,930.8 V915.7 H392.4 V923.4 M376.9,930.8 H384.9" fill="none" stroke="#a8b1c0" stroke-width="1.5"/><rect x="375.2" y="914.0" width="3.4" height="3.4" fill="#86b8e4" /><rect x="390.7" y="914.0" width="3.4" height="3.4" fill="#86b8e4" /><rect x="375.2" y="929.1" width="3.4" height="3.4" fill="#86b8e4" /><g transform="translate(385.4,933.8) rotate(-44)"><polygon points="0,0 3.4,-2.3 3.4,2.3" fill="#f2f2f2"/><polygon points="0,0 1.2,-0.8 1.2,0.8" fill="#666"/><rect x="3.4" y="-2.3" width="7.4" height="4.6" fill="#f4d080"/><rect x="3.4" y="-0.5" width="7.4" height="1.1" fill="#ecc06a"/><rect x="10.8" y="-2.3" width="2.6" height="4.6" rx="0.9" fill="#e8766a"/></g>
<polygon points="404.9,918.0 407.6,914.1 420.2,914.1 417.6,918.0" fill="#b4dcfa" /><rect x="404.9" y="918.0" width="12.7" height="12.2" fill="#8ccaf7" /><polygon points="417.6,918.0 420.2,914.1 420.2,926.7 417.6,930.2" fill="#5fa8e6" /><polygon points="404.9,930.2 417.6,930.2 420.2,926.7 420.2,927.9 417.6,931.4 404.9,931.4" fill="#2f4560" /><rect x="404.9" y="931.4" width="12.7" height="2.8" fill="#f4f4f4" /><polygon points="417.6,931.4 420.2,927.9 420.2,930.6 417.6,934.2" fill="#e2e2e2" /><rect x="421.9" y="917.3" width="2.1" height="12.9" fill="#f4f4f4" /><polygon points="421.0,917.8 422.9,914.6 424.9,917.8" fill="#f4f4f4" />
<polygon points="434.9,918.0 437.6,914.1 450.2,914.1 447.6,918.0" fill="#b4dcfa" /><rect x="434.9" y="918.0" width="12.7" height="12.2" fill="#8ccaf7" /><polygon points="447.6,918.0 450.2,914.1 450.2,926.7 447.6,930.2" fill="#5fa8e6" /><polygon points="434.9,930.2 447.6,930.2 450.2,926.7 450.2,927.9 447.6,931.4 434.9,931.4" fill="#2f4560" /><rect x="434.9" y="931.4" width="12.7" height="2.8" fill="#f4f4f4" /><polygon points="447.6,931.4 450.2,927.9 450.2,930.6 447.6,934.2" fill="#e2e2e2" /><rect x="451.9" y="917.3" width="2.1" height="12.9" fill="#f4f4f4" /><polygon points="451.0,917.8 452.9,914.6 454.9,917.8" fill="#f4f4f4" />
<path d="M465.2,926 C466.4,921 469.4,918 473.2,918 L473.2,931.3 C469.9,931.6 466.9,931 465.5,930Z" fill="#8fd3a0"/>
<polygon points="465.5,928.2 470.9,927.4 470.9,931.4 466.3,931.0" fill="#b4c6b8" />
<polygon points="478.4,918.0 483.0,918.0 485.3,923.2 483.6,929.0 478.4,930.7" fill="#92c4a4" />
<polygon points="472.1,917.5 478.4,914.0 478.4,929.0 473.2,933.6" fill="#f0b890" />
<polygon points="494.9,918.0 497.6,914.1 510.2,914.1 507.6,918.0" fill="#b4dcfa" /><rect x="494.9" y="918.0" width="12.7" height="12.2" fill="#8ccaf7" /><polygon points="507.6,918.0 510.2,914.1 510.2,926.7 507.6,930.2" fill="#5fa8e6" /><polygon points="494.9,930.2 507.6,930.2 510.2,926.7 510.2,927.9 507.6,931.4 494.9,931.4" fill="#2f4560" /><rect x="494.9" y="931.4" width="12.7" height="2.8" fill="#f4f4f4" /><polygon points="507.6,931.4 510.2,927.9 510.2,930.6 507.6,934.2" fill="#e2e2e2" /><rect x="511.9" y="917.3" width="2.1" height="12.9" fill="#f4f4f4" /><polygon points="511.0,917.8 512.9,914.6 514.9,917.8" fill="#f4f4f4" />
<polygon points="533.5,914.6 533.5,933.0 524.9,933.0" fill="#d8d8d8" />
<polygon points="534.1,914.6 543.3,933.0 534.1,933.0" fill="#8ccaf7" />
<rect x="533.4" y="916.0" width="0.8" height="17.0" fill="#7f9cc0" />
<path d="M556.9,930.8 V915.7 H572.4 V923.4 M556.9,930.8 H564.9" fill="none" stroke="#a8b1c0" stroke-width="1.5"/><rect x="555.2" y="914.0" width="3.4" height="3.4" fill="#86b8e4" /><rect x="570.7" y="914.0" width="3.4" height="3.4" fill="#86b8e4" /><rect x="555.2" y="929.1" width="3.4" height="3.4" fill="#86b8e4" /><g transform="translate(565.4,933.8) rotate(-44)"><polygon points="0,0 3.4,-2.3 3.4,2.3" fill="#f2f2f2"/><polygon points="0,0 1.2,-0.8 1.2,0.8" fill="#666"/><rect x="3.4" y="-2.3" width="7.4" height="4.6" fill="#f4d080"/><rect x="3.4" y="-0.5" width="7.4" height="1.1" fill="#ecc06a"/><rect x="10.8" y="-2.3" width="2.6" height="4.6" rx="0.9" fill="#e8766a"/></g>
<polygon points="584.9,918.0 587.6,914.1 600.2,914.1 597.6,918.0" fill="#b4dcfa" /><rect x="584.9" y="918.0" width="12.7" height="12.2" fill="#8ccaf7" /><polygon points="597.6,918.0 600.2,914.1 600.2,926.7 597.6,930.2" fill="#5fa8e6" /><polygon points="584.9,930.2 597.6,930.2 600.2,926.7 600.2,927.9 597.6,931.4 584.9,931.4" fill="#2f4560" /><rect x="584.9" y="931.4" width="12.7" height="2.8" fill="#f4f4f4" /><polygon points="597.6,931.4 600.2,927.9 600.2,930.6 597.6,934.2" fill="#e2e2e2" /><rect x="601.9" y="917.3" width="2.1" height="12.9" fill="#f4f4f4" /><polygon points="601.0,917.8 602.9,914.6 604.9,917.8" fill="#f4f4f4" />
<polygon points="615.0,918.9 619.3,914.3 624.7,913.9 621.4,917.8" fill="#f4f4f4" /><path d="M615.0,918.9 L621.4,917.8 C626.6,918.2 630.2,921.8 630.4,926.8 L630.4,934 L615.0,934Z" fill="#e6e6e6"/><polygon points="630.4,926.8 635.1,922.5 635.1,928.3 630.4,934.0" fill="#c6c6c6" /><path d="M621.4,917.8 L625.7,913.5 C631.0,913.8 634.8,917 635.1,921.6 L630.4,926.8 C630.2,921.8 626.6,918.2 621.4,917.8Z" fill="#8ccaf7" stroke="#2a5c94" stroke-width="0.7" stroke-linejoin="round"/>
<path d="M646.9,930.8 V915.7 H662.4 V923.4 M646.9,930.8 H654.9" fill="none" stroke="#a8b1c0" stroke-width="1.5"/><rect x="645.2" y="914.0" width="3.4" height="3.4" fill="#86b8e4" /><rect x="660.7" y="914.0" width="3.4" height="3.4" fill="#86b8e4" /><rect x="645.2" y="929.1" width="3.4" height="3.4" fill="#86b8e4" /><g transform="translate(655.4,933.8) rotate(-44)"><polygon points="0,0 3.4,-2.3 3.4,2.3" fill="#f2f2f2"/><polygon points="0,0 1.2,-0.8 1.2,0.8" fill="#666"/><rect x="3.4" y="-2.3" width="7.4" height="4.6" fill="#f4d080"/><rect x="3.4" y="-0.5" width="7.4" height="1.1" fill="#ecc06a"/><rect x="10.8" y="-2.3" width="2.6" height="4.6" rx="0.9" fill="#e8766a"/></g>
<polygon points="674.9,918.0 677.6,914.1 690.2,914.1 687.6,918.0" fill="#b4dcfa" /><rect x="674.9" y="918.0" width="12.7" height="12.2" fill="#8ccaf7" /><polygon points="687.6,918.0 690.2,914.1 690.2,926.7 687.6,930.2" fill="#5fa8e6" /><polygon points="674.9,930.2 687.6,930.2 690.2,926.7 690.2,927.9 687.6,931.4 674.9,931.4" fill="#2f4560" /><rect x="674.9" y="931.4" width="12.7" height="2.8" fill="#f4f4f4" /><polygon points="687.6,931.4 690.2,927.9 690.2,930.6 687.6,934.2" fill="#e2e2e2" /><rect x="691.9" y="917.3" width="2.1" height="12.9" fill="#f4f4f4" /><polygon points="691.0,917.8 692.9,914.6 694.9,917.8" fill="#f4f4f4" />
<polygon points="704.9,918.0 707.6,914.1 720.2,914.1 717.6,918.0" fill="#b4dcfa" /><rect x="704.9" y="918.0" width="12.7" height="12.2" fill="#8ccaf7" /><polygon points="717.6,918.0 720.2,914.1 720.2,926.7 717.6,930.2" fill="#5fa8e6" /><polygon points="704.9,930.2 717.6,930.2 720.2,926.7 720.2,927.9 717.6,931.4 704.9,931.4" fill="#2f4560" /><rect x="704.9" y="931.4" width="12.7" height="2.8" fill="#f4f4f4" /><polygon points="717.6,931.4 720.2,927.9 720.2,930.6 717.6,934.2" fill="#e2e2e2" /><rect x="721.9" y="917.3" width="2.1" height="12.9" fill="#f4f4f4" /><polygon points="721.0,917.8 722.9,914.6 724.9,917.8" fill="#f4f4f4" />
<polygon points="735.0,918.9 739.3,914.3 744.7,913.9 741.4,917.8" fill="#f4f4f4" /><path d="M735.0,918.9 L741.4,917.8 C746.6,918.2 750.2,921.8 750.4,926.8 L750.4,934 L735.0,934Z" fill="#e6e6e6"/><polygon points="750.4,926.8 755.1,922.5 755.1,928.3 750.4,934.0" fill="#c6c6c6" /><path d="M741.4,917.8 L745.7,913.5 C751.0,913.8 754.8,917 755.1,921.6 L750.4,926.8 C750.2,921.8 746.6,918.2 741.4,917.8Z" fill="#8ccaf7" stroke="#2a5c94" stroke-width="0.7" stroke-linejoin="round"/>
<polygon points="764.8,925.7 774.7,914.2 780.6,914.2 784.6,918.5 784.6,933.6 766.8,933.6 764.8,931.0" fill="#cfcfcf" />
<polygon points="764.8,925.7 770.9,929.0 778.9,933.6 766.8,933.6 764.8,931.0" fill="#e4e4e4" />
<polygon points="765.5,923.8 774.0,914.6 780.0,919.2 770.7,927.7" fill="#8ccaf7" stroke="#2a5c94" stroke-width="0.7" stroke-linejoin="round"/>
<path d="M796.9,930.8 V915.7 H812.4 V923.4 M796.9,930.8 H804.9" fill="none" stroke="#a8b1c0" stroke-width="1.5"/><rect x="795.2" y="914.0" width="3.4" height="3.4" fill="#86b8e4" /><rect x="810.7" y="914.0" width="3.4" height="3.4" fill="#86b8e4" /><rect x="795.2" y="929.1" width="3.4" height="3.4" fill="#86b8e4" /><g transform="translate(805.4,933.8) rotate(-44)"><polygon points="0,0 3.4,-2.3 3.4,2.3" fill="#f2f2f2"/><polygon points="0,0 1.2,-0.8 1.2,0.8" fill="#666"/><rect x="3.4" y="-2.3" width="7.4" height="4.6" fill="#f4d080"/><rect x="3.4" y="-0.5" width="7.4" height="1.1" fill="#ecc06a"/><rect x="10.8" y="-2.3" width="2.6" height="4.6" rx="0.9" fill="#e8766a"/></g>
<polygon points="824.9,918.0 827.6,914.1 840.2,914.1 837.6,918.0" fill="#b4dcfa" /><rect x="824.9" y="918.0" width="12.7" height="12.2" fill="#8ccaf7" /><polygon points="837.6,918.0 840.2,914.1 840.2,926.7 837.6,930.2" fill="#5fa8e6" /><polygon points="824.9,930.2 837.6,930.2 840.2,926.7 840.2,927.9 837.6,931.4 824.9,931.4" fill="#2f4560" /><rect x="824.9" y="931.4" width="12.7" height="2.8" fill="#f4f4f4" /><polygon points="837.6,931.4 840.2,927.9 840.2,930.6 837.6,934.2" fill="#e2e2e2" /><rect x="841.9" y="917.3" width="2.1" height="12.9" fill="#f4f4f4" /><polygon points="841.0,917.8 842.9,914.6 844.9,917.8" fill="#f4f4f4" />
</svg></div>
</body></html>
